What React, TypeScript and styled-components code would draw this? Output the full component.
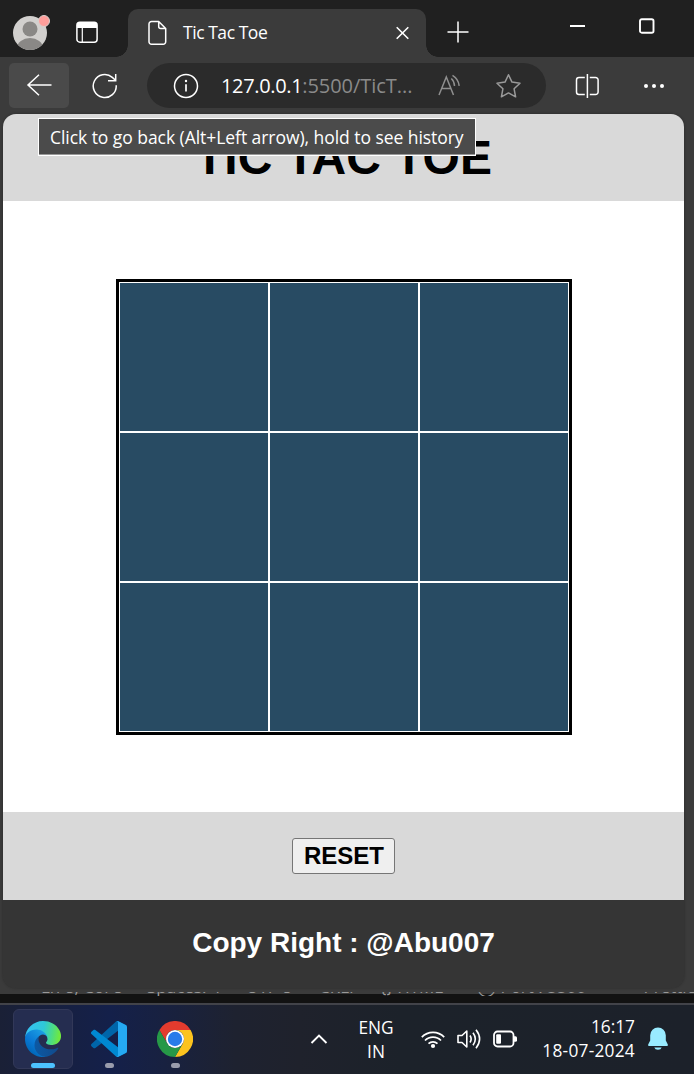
import React from "react";
import styled, { createGlobalStyle } from "styled-components";

const ui = `"Open Sans", "Noto Sans", sans-serif`;
const arial = `"Liberation Sans", Arial, sans-serif`;

const Global = createGlobalStyle`
  * { box-sizing: border-box; }
  body { margin: 0; background: #121212; overflow: hidden; }
  svg { display: block; flex: none; }
`;

const Screen = styled.div`
  width: 694px;
  height: 1074px;
  display: flex;
  flex-direction: column;
  overflow: hidden;
`;
const Browser = styled.div`
  height: 992px;
  flex: none;
  background: #3b3b3b;
  display: flex;
  flex-direction: column;
`;
const TabStrip = styled.div`
  height: 57px;
  flex: none;
  background: #202020;
  display: flex;
  align-items: flex-start;
`;
const Avatar = styled.div`
  padding: 14px 0 0 12px;
  width: 76px;
`;
const TabActions = styled.div`
  padding-top: 21px;
  width: 52px;
`;
const Tab = styled.div`
  position: relative;
  width: 298px;
  height: 48px;
  margin-top: 9px;
  padding: 0 15px 0 20px;
  display: flex;
  align-items: center;
  background: #3b3b3b;
  border-radius: 10px 10px 0 0;
  &::before, &::after {
    content: "";
    position: absolute;
    bottom: 0;
    width: 12px;
    height: 12px;
  }
  &::before { left: -12px; background: radial-gradient(circle at 0 0, #202020 11.5px, #3b3b3b 12px); }
  &::after { right: -12px; background: radial-gradient(circle at 100% 0, #202020 11.5px, #3b3b3b 12px); }
`;
const Label = styled.span<{ $size: number; $color?: string; $spacing?: number }>`
  font-family: ${ui};
  font-size: ${(p) => p.$size}px;
  line-height: 24px;
  letter-spacing: ${(p) => p.$spacing ?? 0}px;
  color: ${(p) => p.$color ?? "#fff"};
  white-space: pre;
`;
const TabTitle = styled(Label)`
  flex: 1;
  margin-left: 15px;
  padding-bottom: 2px;
`;
const NewTab = styled.div`
  padding: 21px 0 0 21px;
`;
const WindowButtons = styled.div`
  margin-left: auto;
  padding: 18px 39px 0 0;
  display: flex;
  gap: 53px;
`;
const Toolbar = styled.div`
  height: 57px;
  flex: none;
  padding: 0 28px 0 9px;
  display: flex;
  align-items: center;
`;
const BackButton = styled.div`
  width: 60px;
  height: 45px;
  border-radius: 5px;
  background: #4a4a4a;
  display: flex;
  align-items: center;
  justify-content: center;
  padding: 0 1px 2px 0;
`;
const Reload = styled.div`
  width: 78px;
  padding-left: 23px;
`;
const AddressBar = styled.div`
  width: 399px;
  height: 45px;
  border-radius: 23px;
  background: #2b2b2b;
  display: flex;
  align-items: center;
  padding: 0 25px 0 26px;
`;
const Url = styled.div`
  flex: 1;
  margin-left: 22px;
`;
const AddressIcons = styled.div`
  display: flex;
  align-items: center;
  gap: 33px;
`;
const ToolbarEnd = styled.div`
  flex: 1;
  display: flex;
  align-items: center;
  justify-content: space-between;
  padding-left: 29px;
`;
const Tooltip = styled.div`
  position: absolute;
  left: 38px;
  top: 118px;
  width: 438px;
  height: 38px;
  padding: 0 0 0 11px;
  display: flex;
  align-items: center;
  background: #4b4b4b;
  border: 1px solid #fff;
  box-shadow: inset 0 -1px #999;
  z-index: 2;
`;
const Page = styled.div`
  width: 681px;
  height: 874px;
  margin-left: 3px;
  border-radius: 13px;
  overflow: hidden;
  display: flex;
  flex-direction: column;
  box-shadow: 0 0 3px rgba(0, 0, 0, 0.3);
`;
const Heading = styled.h1`
  margin: 0;
  height: 87px;
  background: #d9d9d9;
  color: #000;
  text-align: center;
  font: bold 48px/87px ${arial};
`;
const Main = styled.main`
  height: 611px;
  background: #fff;
  display: flex;
  align-items: center;
  justify-content: center;
  padding-left: 1px;
`;
const Board = styled.div`
  display: grid;
  grid-template-columns: repeat(3, 150px);
  grid-auto-rows: 150px;
  border: 3px solid #000;
`;
const Cell = styled.div`
  background: #284b63;
  border: 1px solid #fff;
`;
const Controls = styled.div`
  height: 88px;
  background: #d9d9d9;
  display: flex;
  align-items: center;
  justify-content: center;
`;
const ResetButton = styled.button`
  width: 103px;
  height: 36px;
  padding: 0 0 0 1px;
  border: 1px solid #767676;
  border-radius: 3px;
  background: #efefef;
  color: #000;
  font: bold 24px/34px ${arial};
`;
const Footer = styled.footer`
  height: 88px;
  background: #353535;
  color: #fff;
  text-align: center;
  font: bold 28px/85px ${arial};
`;
const StatusBar = styled.div`
  height: 11px;
  flex: none;
  overflow: hidden;
  background: linear-gradient(#3b3b3b 2px, #121212 2px);
  display: flex;
  align-items: flex-start;
  padding-left: 41px;
`;
const StatusItem = styled.span<{ $width: number }>`
  width: ${(p) => p.$width}px;
  flex: none;
  margin-top: -15px;
  height: 19px;
  overflow: hidden;
  font: 17px/20px ${ui};
  color: #999;
  white-space: pre;
`;
const Taskbar = styled.div`
  height: 71px;
  flex: none;
  border-top: 2px solid #424349;
  background: linear-gradient(90deg, #1a2036 0, #14204a 110px, #182140 165px, #1e2230 235px, #1f222c 300px, #1c222a 400px, #1c212a 100%);
  display: flex;
  align-items: center;
  padding-bottom: 1px;
`;
const Apps = styled.div`
  display: flex;
  gap: 6px;
  padding-left: 13px;
`;
const AppTile = styled.div<{ $active?: boolean }>`
  width: 60px;
  height: 60px;
  border-radius: 6px;
  background: ${(p) => (p.$active ? "#252d50" : "transparent")};
  border: 1px solid ${(p) => (p.$active ? "#323858" : "transparent")};
  display: flex;
  flex-direction: column;
  align-items: center;
  justify-content: space-between;
  padding-top: 11px;
`;
const Indicator = styled.i<{ $active?: boolean }>`
  width: ${(p) => (p.$active ? 24 : 9)}px;
  height: 5px;
  border-radius: 3px;
  background: ${(p) => (p.$active ? "#4cc2ff" : "#999cac")};
`;
const Tray = styled.div`
  flex: 1;
  display: flex;
  align-items: center;
  padding-left: 105px;
`;
const Language = styled.div`
  width: 50px;
  margin-left: 23px;
  padding-top: 2px;
  display: flex;
  flex-direction: column;
  align-items: center;
`;
const TrayIcons = styled.div`
  display: flex;
  align-items: center;
  gap: 12px;
  margin-left: 20px;
`;
const Clock = styled.div`
  width: 96px;
  margin-left: 21px;
  padding-bottom: 1px;
  display: flex;
  flex-direction: column;
  align-items: flex-end;
`;
const Bell = styled.div`
  margin-left: 13px;
`;

const EdgeIcon = () => (
  <svg width="36" height="36" viewBox="0 0 256 256">
    <defs>
      <linearGradient id="ea" x1="63" y1="177" x2="241" y2="177" gradientUnits="userSpaceOnUse">
        <stop stopColor="#0c59a4" /><stop offset="1" stopColor="#114a8b" />
      </linearGradient>
      <linearGradient id="eb" x1="155" y1="100" x2="46" y2="230" gradientUnits="userSpaceOnUse">
        <stop stopColor="#1b9de2" /><stop offset=".6" stopColor="#0a78d4" /><stop offset="1" stopColor="#0067b8" />
      </linearGradient>
      <linearGradient id="ec" x1="10" y1="60" x2="245" y2="100" gradientUnits="userSpaceOnUse">
        <stop stopColor="#35c1f1" /><stop offset=".5" stopColor="#2fc8d8" /><stop offset=".78" stopColor="#4bdc85" /><stop offset="1" stopColor="#6fe840" />
      </linearGradient>
    </defs>
    <path d="M231 190.500c-3.400 1.800-6.900 3.400-10.500 4.700-11.500 4.300-23.600 6.500-35.900 6.500-47.300 0-88.500-32.500-88.500-74.300.1-11.400 6.400-21.900 16.400-27.300-42.800 1.800-53.800 46.400-53.800 72.500 0 73.900 68.100 81.400 82.800 81.400 7.900 0 19.800-2.300 27-4.600l1.300-.4c27.600-9.500 51-28.100 66.600-52.800 2.200-3.500-1.800-7.500-5.400-5.700z" fill="url(#ea)" />
    <path d="M105.700 241.400c-8.900-5.500-16.600-12.800-22.700-21.300-26.300-36-18.400-86.500 17.600-112.800 3.800-2.700 7.700-5.200 11.900-7.200 3.100-1.500 8.400-4.100 15.500-4 10.100.1 19.600 4.900 25.700 13 4 5.400 6.300 11.900 6.400 18.700 0-.2 24.500-79.600-80-79.600C36.200 48.200.1 89.900.1 126.500c-.2 19.300 4 38.500 12.100 56 27.600 58.800 94.800 87.600 156.400 67.100-21.100 6.600-44.100 3.700-62.900-8.200z" fill="url(#eb)" />
    <path d="M152.300 148.900c-.9 1-3.400 2.500-3.400 5.600 0 2.600 1.700 5.200 4.800 7.300 14.400 10.100 41.700 8.700 41.800 8.700 10.700 0 21.200-2.900 30.500-8.300 18.800-11 30.400-31.100 30.400-52.900.3-22.400-8-37.300-11.300-43.900C223.900 24.200 178.300 0 128 0 57.900 0 .8 56.200 0 126.200c.5-36.500 36.800-66 80-66 3.500 0 23.500.3 42 10.100 16.300 8.600 24.900 18.900 30.800 29.200 6.200 10.700 7.300 24.100 7.300 29.500 0 5.300-2.700 13.300-7.800 19.900z" fill="url(#ec)" />
  </svg>
);

const CodeIcon = () => (
  <svg width="36" height="36" viewBox="0 0 100 100">
    <path d="M96.500 10.800 75.900.9C73.500-.3 70.600.2 68.800 2.100L1.300 63.600c-1.800 1.600-1.800 4.500 0 6.200l5.500 5c1.500 1.300 3.700 1.400 5.300.2l81.200-61.600c2.800-2 6.700-.1 6.700 3.300v-.2c0-2.400-1.400-4.600-3.500-5.700z" fill="#0065a9" />
    <path d="m96.500 89.200-20.600 9.900c-2.400 1.200-5.300.7-7.100-1.200L1.300 36.400c-1.800-1.600-1.800-4.500 0-6.200l5.500-5c1.500-1.300 3.700-1.400 5.300-.2l81.200 61.600c2.800 2 6.700.1 6.700-3.300v.2c0 2.400-1.400 4.600-3.500 5.700z" fill="#0088d1" />
    <path d="M75.900 99.100c-2.400 1.200-5.300.7-7.100-1.200 2.300 2.300 6.200.7 6.200-2.600V4.700c0-3.300-3.900-4.900-6.200-2.600 1.800-1.900 4.700-2.400 7.100-1.200l20.600 9.900c2.100 1.100 3.500 3.300 3.500 5.700v67c0 2.400-1.400 4.600-3.500 5.700z" fill="#25a9f2" />
  </svg>
);

const ChromeIcon = () => (
  <svg width="36" height="36" viewBox="0 0 48 48">
    <path d="M3.200 12A24 24 0 0 1 44.800 12H24A12 12 0 0 0 13.600 30Z" fill="#e33b2e" />
    <path d="M44.800 12A24 24 0 0 1 24 48L34.400 30A12 12 0 0 0 24 12Z" fill="#fcc31e" />
    <path d="M24 48A24 24 0 0 1 3.200 12L13.600 30A12 12 0 0 0 34.400 30Z" fill="#269847" />
    <circle cx="24" cy="24" r="12" fill="#fff" />
    <circle cx="24" cy="24" r="9.600" fill="#287bea" />
  </svg>
);

const status: [string, number][] = [
  ["Ln 8, Col 8", 106], ["Spaces: 4", 99], ["UTF-8", 73], ["CRLF", 61],
  ["{} HTML", 97], ["◯ Port : 5500", 134], ["✓✓ Prettier", 100],
];

export default function App() {
  return (
    <Screen>
      <Global />
      <Browser>
        <TabStrip>
          <Avatar>
            <svg width="40" height="38" viewBox="0 0 40 38">
              <clipPath id="av"><circle cx="18" cy="19" r="17" /></clipPath>
              <circle cx="18" cy="19" r="17" fill="#d2d0ce" />
              <g clipPath="url(#av)" fill="#8a8886">
                <circle cx="18" cy="15" r="7.500" />
                <ellipse cx="18" cy="34" rx="13" ry="10" />
              </g>
              <circle cx="32" cy="7" r="5.500" fill="#ff9e9b" stroke="#d9d0ce" strokeWidth="1" />
            </svg>
          </Avatar>
          <TabActions>
            <svg width="22" height="22" viewBox="0 0 22 22" fill="none" stroke="#fff" strokeWidth="1.500">
              <rect x=".9" y="1.200" width="20.200" height="20" rx="3" />
              <path d="M1 4a3 3 0 0 1 3-3h14a3 3 0 0 1 3 3v3H1Z" fill="#fff" stroke="none" />
              <path d="M6.300 7v14" strokeWidth="1.200" />
            </svg>
          </TabActions>
          <Tab>
            <svg width="20" height="26" viewBox="0 0 20 26" fill="none" stroke="#fff" strokeWidth="1.500" strokeLinejoin="round">
              <path d="M3.500 1.500h7.200l7 7v13.300a2.500 2.500 0 0 1-2.500 2.500H3.500A2.500 2.500 0 0 1 1 21.800V4a2.500 2.500 0 0 1 2.500-2.500ZM10.700 1.700v4.800a2 2 0 0 0 2 2h4.800" />
            </svg>
            <TabTitle $size={17.5} $spacing={-0.45}>Tic Tac Toe</TabTitle>
            <svg width="16" height="16" viewBox="0 0 16 16" stroke="#fff" strokeWidth="1.600">
              <path d="m1.700 2.200 11.600 11.600M13.300 2.200 1.700 13.800" />
            </svg>
          </Tab>
          <NewTab>
            <svg width="22" height="22" viewBox="0 0 22 22" stroke="#fff" strokeWidth="1.500">
              <path d="M.5 11h21M11 .5v21" />
            </svg>
          </NewTab>
          <WindowButtons>
            <svg width="16" height="16" viewBox="0 0 16 16"><path d="M0 8h15" stroke="#fff" strokeWidth="2" /></svg>
            <svg width="16" height="16" viewBox="0 0 16 16"><rect x="1" y="1.200" width="13.500" height="13.500" rx="1.800" fill="none" stroke="#fff" strokeWidth="1.900" /></svg>
          </WindowButtons>
        </TabStrip>
        <Toolbar>
          <BackButton>
            <svg width="26" height="24" viewBox="0 0 26 24" fill="none" stroke="#fff" strokeWidth="1.500">
              <path d="M25.500 12H2M13 1.700 2 12l11 10.300" />
            </svg>
          </BackButton>
          <Reload>
            <svg width="26" height="26" viewBox="0 0 26 26" fill="none" stroke="#fff" strokeWidth="1.500">
              <path d="M24.200 12.200A11.500 11.500 0 1 1 20.300 4.400L23.500 7.300M23.700 1v6.700H16" />
            </svg>
          </Reload>
          <AddressBar>
            <svg width="26" height="26" viewBox="0 0 26 26" fill="none" stroke="#fff">
              <circle cx="13" cy="13" r="11.500" strokeWidth="1.500" />
              <path d="M13 11.300v7.200" strokeWidth="1.700" />
              <circle cx="13" cy="8" r="1.200" fill="#fff" stroke="none" />
            </svg>
            <Url>
              <Label $size={20} $spacing={-0.35}>127.0.0.1</Label>
              <Label $size={20} $spacing={-0.05} $color="#8a8a8a">:5500/TicT...</Label>
            </Url>
            <AddressIcons>
              <svg width="25" height="24" viewBox="0 0 25 24" fill="none" stroke="#8f8f8f" strokeWidth="1.500">
                <path d="m2 21 7.300-18L16.500 21M4.600 14.500h9.500M14.300 4.500q3 2.700 3.200 7.500M15.500 1.300q6 3.700 6.700 10.500" />
              </svg>
              <svg width="26" height="26" viewBox="0 0 26 26" fill="none" stroke="#9a9a9a" strokeWidth="1.500" strokeLinejoin="round">
                <path d="m13.500 1.800 3.500 7.300 8 1.100-5.900 5.600 1.500 8-7.100-3.900-7.100 3.900 1.500-8-5.900-5.600 8-1.100Z" />
              </svg>
            </AddressIcons>
          </AddressBar>
          <ToolbarEnd>
            <svg width="25" height="24" viewBox="0 0 25 24" fill="none" stroke="#fff" strokeWidth="1.500">
              <path d="M9.800 3.500H4A2.500 2.500 0 0 0 1.500 6v12A2.500 2.500 0 0 0 4 20.500h5.800M14.800 3.500h5.800A2.500 2.500 0 0 1 23.100 6v12a2.500 2.500 0 0 1-2.500 2.500h-5.800M12.400 0v24" />
            </svg>
            <svg width="24" height="6" viewBox="0 0 24 6" fill="#fff">
              <circle cx="4" cy="3" r="2" /><circle cx="12" cy="3" r="2" /><circle cx="20" cy="3" r="2" />
            </svg>
          </ToolbarEnd>
        </Toolbar>
        <Tooltip><Label $size={17.5} $spacing={-0.05}>Click to go back (Alt+Left arrow), hold to see history</Label></Tooltip>
        <Page>
          <Heading>TIC TAC TOE</Heading>
          <Main>
            <Board>{Array.from({ length: 9 }, (_, i) => <Cell key={i} />)}</Board>
          </Main>
          <Controls><ResetButton>RESET</ResetButton></Controls>
          <Footer>Copy Right : @Abu007</Footer>
        </Page>
      </Browser>
      <StatusBar>
        {status.map(([text, width]) => <StatusItem key={text} $width={width}>{text}</StatusItem>)}
      </StatusBar>
      <Taskbar>
        <Apps>
          <AppTile $active><EdgeIcon /><Indicator $active /></AppTile>
          <AppTile><CodeIcon /><Indicator /></AppTile>
          <AppTile><ChromeIcon /><Indicator /></AppTile>
        </Apps>
        <Tray>
          <svg width="18" height="12" viewBox="0 0 18 12" fill="none" stroke="#fff" strokeWidth="1.900"><path d="m1.500 10 7.500-7.500 7.500 7.500" /></svg>
          <Language>
            <Label $size={17.3} $spacing={-0.1}>ENG</Label>
            <Label $size={17.3}>IN</Label>
          </Language>
          <TrayIcons>
            <svg width="24" height="20" viewBox="0 0 24 20" fill="none" stroke="#fff" strokeWidth="1.700">
              <path d="M.8 8.200a15.500 15.500 0 0 1 22.400 0M4 11.500a11 11 0 0 1 16 0M7.500 14.600a6.500 6.500 0 0 1 9 0" />
              <circle cx="12" cy="17" r="2.100" fill="#fff" stroke="none" />
            </svg>
            <svg width="24" height="22" viewBox="0 0 24 22" fill="none" stroke="#fff" strokeWidth="1.600" strokeLinejoin="round">
              <path d="M1 7.500h4L9.800 3v16L5 14.500H1ZM13 7.500q2.300 3.500 0 7M16 4.700q4.600 6.300 0 12.600M19 1.800q7.200 9.200 0 18.400" />
            </svg>
            <svg width="25" height="18" viewBox="0 0 25 18" fill="none" stroke="#fff" strokeWidth="1.800">
              <rect x="1" y="1.500" width="19.500" height="15" rx="3.500" />
              <rect x="3.200" y="4.300" width="4.800" height="9.500" rx="1" fill="#fff" stroke="none" />
              <path d="M21 6.300h1.500a1.500 1.500 0 0 1 1.500 1.500v2.400a1.500 1.500 0 0 1-1.500 1.500H21Z" fill="#fff" stroke="none" />
            </svg>
          </TrayIcons>
          <Clock>
            <Label $size={17.3} $spacing={0}>16:17</Label>
            <Label $size={17.3} $spacing={0.25}>18-07-2024</Label>
          </Clock>
          <Bell>
            <svg width="20" height="24" viewBox="0 0 20 24" fill="#99ebff">
              <path d="M10 .5a7.800 7.800 0 0 0-7.800 7.800v5.200L.3 17.300c-.5 1 0 1.700 1 1.700h17.400c1 0 1.500-.7 1-1.700l-1.900-3.800V8.300A7.800 7.800 0 0 0 10 .5ZM6.300 20.400h7.400a3.800 3 0 0 1-7.400 0Z" />
            </svg>
          </Bell>
        </Tray>
      </Taskbar>
    </Screen>
  );
}
